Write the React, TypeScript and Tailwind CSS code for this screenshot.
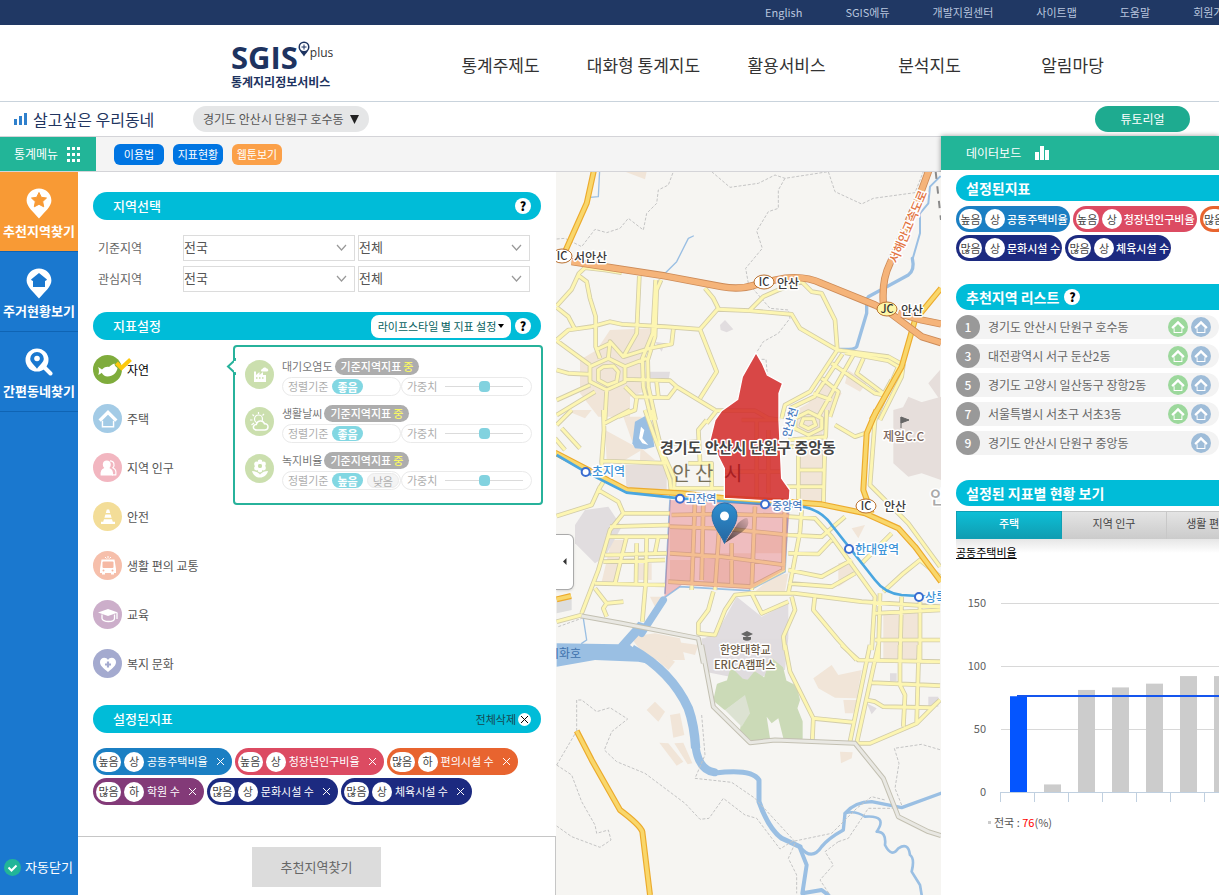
import React from "react";

/* ---------- data ---------- */

const topLinks = ["English", "SGIS에듀", "개발지원센터", "사이트맵", "도움말", "회원가입"];
const mainLinks = ["통계주제도", "대화형 통계지도", "활용서비스", "분석지도", "알림마당"];

type Tag = { level: string; grade: string; name: string; tone: string };

const TONE_BLUE = "bg-[#1b7fc3]";
const TONE_RED = "bg-[#dc4b62]";
const TONE_ORANGE = "bg-[#e8642f]";
const TONE_PURPLE = "bg-[#833a78]";
const TONE_NAVY = "bg-[#1c2a80]";

const tags: Tag[] = [
  { level: "높음", grade: "상", name: "공동주택비율", tone: TONE_BLUE },
  { level: "높음", grade: "상", name: "청장년인구비율", tone: TONE_RED },
  { level: "많음", grade: "하", name: "편의시설 수", tone: TONE_ORANGE },
  { level: "많음", grade: "하", name: "학원 수", tone: TONE_PURPLE },
  { level: "많음", grade: "상", name: "문화시설 수", tone: TONE_NAVY },
  { level: "많음", grade: "상", name: "체육시설 수", tone: TONE_NAVY },
];

const indicators = [
  { name: "대기오염도", icon: "factory", options: ["좋음"] },
  { name: "생활날씨", icon: "weather", options: ["좋음"] },
  { name: "녹지비율", icon: "flower", options: ["높음", "낮음"] },
];

const regions = [
  { no: 1, name: "경기도 안산시 단원구 호수동", green: true },
  { no: 3, name: "대전광역시 서구 둔산2동", green: true },
  { no: 5, name: "경기도 고양시 일산동구 장항2동", green: true },
  { no: 7, name: "서울특별시 서초구 서초3동", green: true },
  { no: 9, name: "경기도 안산시 단원구 중앙동", green: false },
];

/* ---------- small icons ---------- */

function Pin({ children }: { children: React.ReactNode }) {
  return (
    <svg width="26" height="31" viewBox="0 0 26 31" aria-hidden="true">
      <path d="M13 .5C6 .5 .6 5.900 .6 12.500c0 6 6.400 11 12.400 18 6-7 12.400-12 12.400-18C25.400 5.900 20 .5 13 .5z" fill="#fff" />
      {children}
    </svg>
  );
}

function StarPin() {
  return (
    <Pin>
      <path d="M13 4.500l2.300 4.800 5.200.7-3.800 3.600 1 5.200-4.700-2.500-4.700 2.500 1-5.200L5.500 10l5.200-.7z" fill="#f89a35" stroke="#f89a35" strokeLinejoin="round" />
    </Pin>
  );
}

function HousePin() {
  return (
    <Pin>
      <path d="M13 5l8 6.500-1.300 1.400-.7-.4V19H7v-6.500l-.7.4L5 11.500z" fill="#1a78cf" />
    </Pin>
  );
}

function SearchPin() {
  return (
    <svg width="28" height="28" viewBox="0 0 28 28" aria-hidden="true">
      <circle cx="12" cy="12" r="11.500" fill="#fff" />
      <path d="M19 19l6.500 6.500" stroke="#fff" strokeWidth="4" strokeLinecap="round" />
      <path d="M12 4a6.800 6.800 0 0 0-6.800 6.800c0 3.500 4 5.900 6.800 9.900 2.800-4 6.800-6.400 6.800-9.900A6.800 6.800 0 0 0 12 4z" fill="#1a78cf" />
      <circle cx="12" cy="10.500" r="2.800" fill="#fff" />
    </svg>
  );
}

function HouseGlyph({ size = 14 }: { size?: number }) {
  return (
    <svg width={size} height={size} viewBox="0 0 18 18" aria-hidden="true">
      <path d="M1.500 10.500L9 3l7.500 7.500" fill="none" stroke="#fff" strokeWidth="3" />
      <path d="M4 10.500v5.500h10v-5.500" fill="none" stroke="#fff" strokeWidth="1.300" />
    </svg>
  );
}

function Glyph({ name }: { name: string }) {
  const common = { width: 20, height: 20, viewBox: "0 0 20 20", "aria-hidden": true } as const;
  switch (name) {
    case "fish":
      return (
        <svg {...common}>
          <path d="M0 7c1 .6 2.500 1.200 4 2.500C6.500 7 9 6.500 11 7c2-2 4-3 5.500-3.500 0 2 1 3.300 3 4.500-.7 4.500-4.500 8.500-10 8.500-2.600 0-4.500-1.500-5.800-3.700C2.500 14 1.500 14.500 .2 14.800 1 13 1 12 .9 11 1 9.500 .6 8.300 0 7z" fill="#fff" />
        </svg>
      );
    case "people":
      return (
        <svg {...common}>
          <path d="M12 2.800c4 0 5.300 4.200 2.800 7 3 1.200 3.600 3.500 3 7H14" fill="none" stroke="#fff" strokeWidth="1.200" />
          <path d="M8.800 2.500c2.400 0 4 1.600 4 3.900 0 1.500-.6 2.800-1.500 3.600 2.800.9 4.200 3.300 3.700 7.500H2.600c-.5-4.200.9-6.600 3.700-7.500a5 5 0 0 1-1.500-3.600c0-2.300 1.600-3.900 4-3.900z" fill="#fff" />
        </svg>
      );
    case "cone":
      return (
        <svg {...common}>
          <path d="M8.800 2.500h2.400l1 3.500H7.800zM7.400 7.500h5.200l1 3.200H6.400zM6 12.200h8l.8 2.600H17V17H3v-2.200h2.200z" fill="#fff" />
        </svg>
      );
    case "bus":
      return (
        <svg {...common}>
          <path d="M7 1l1.500 1.500M10 0v2.500M13 1l-1.500 1.500" stroke="#fff" />
          <path d="M3.500 3.500h13L18 13v4h-2v1.500h-3V17H7v1.500H4V17H2v-4z" fill="#fff" />
          <rect x="4.500" y="5.500" width="11" height="6.500" rx="1" fill="#f6b9a4" />
          <circle cx="5.500" cy="14.500" r="1" fill="#f6b9a4" />
          <circle cx="14.500" cy="14.500" r="1" fill="#f6b9a4" />
        </svg>
      );
    case "cap":
      return (
        <svg {...common}>
          <path d="M0 7.500L10 4l10 3.500-10 3.500z" fill="#fff" />
          <path d="M4 9.500v4c0 1.600 3 3 6.500 3s6-1.400 6-3v-4M19 8v6" fill="none" stroke="#fff" strokeWidth="1.300" />
        </svg>
      );
    case "heart":
      return (
        <svg {...common}>
          <path d="M10 18C5 14 2 11.500 2 8c0-2.600 2-4.300 4.200-4.300 1.700 0 3 .9 3.800 2.300.8-1.400 2.100-2.300 3.800-2.300C16 3.700 18 5.400 18 8c0 3.500-3 6-8 10z" fill="#fff" />
          <path d="M10 7.500v6M7 10.500h6" stroke="#a4aacf" strokeWidth="2.200" />
        </svg>
      );
    case "factory":
      return (
        <svg {...common}>
          <path d="M4 17V6.500h2V10l3.500-3v3L13 7v3h3v7z" fill="#fff" />
          <path d="M6 13h1.500M9 13h1.500M12 13h1.500" stroke="#a3c96d" strokeWidth="1.500" />
          <path d="M11 5.500c0-1.500 1.400-1.500 1.500-1.500C13 2 16 2 16.500 3.500c2 0 2.500 2.800.5 3h-4.500c-.9 0-1.500-.3-1.500-1z" fill="#fff" />
        </svg>
      );
    case "weather":
      return (
        <svg {...common}>
          <circle cx="8.500" cy="7" r="4" fill="none" stroke="#fff" strokeWidth="1.200" />
          <path d="M8.500 0v2M2.500 2.500L4 4M14 2l-1.500 1.500M0 8h2.500M1.500 13L4 11" stroke="#fff" strokeWidth="1.200" />
          <path d="M7 18c-2.500 0-4-1.500-3.500-3.500.3-1.300 1.500-2 2.800-2C7 10 9 8.800 11 9c1.800.1 3 1.200 3.500 2.800 2-.3 3.600 1 3.500 3.200-.1 2-1.500 3-3.500 3z" fill="#a3c96d" stroke="#fff" strokeWidth="1.500" />
        </svg>
      );
    case "flower":
      return (
        <svg {...common}>
          <g fill="#fff">
            <circle cx="10" cy="3" r="2.400" />
            <circle cx="13.500" cy="5" r="2.400" />
            <circle cx="13.500" cy="9" r="2.400" />
            <circle cx="10" cy="11" r="2.400" />
            <circle cx="6.500" cy="9" r="2.400" />
            <circle cx="6.500" cy="5" r="2.400" />
            <path d="M2 12c3 0 6 1 8 3.500 2-2.500 5-3.500 8-3.500-1 4-4 6.500-8 6.500S3 16 2 12z" />
          </g>
          <circle cx="10" cy="7" r="2" fill="#a3c96d" />
        </svg>
      );
    default:
      return <HouseGlyph size={20} />;
  }
}

function Help() {
  return (
    <button type="button" aria-label="도움말" className="grid size-4 shrink-0 place-items-center rounded-full bg-white text-xs leading-4 font-black text-black">
      ?
    </button>
  );
}

/* ---------- shared parts ---------- */

function SectionBar({ title, children }: { title: string; children?: React.ReactNode }) {
  return (
    <div className="flex h-7 items-center justify-between rounded-full bg-[#00bcd8] pr-[10px] pl-5">
      <h2 className="text-[13px] font-medium text-white">{title}</h2>
      {children}
    </div>
  );
}

function TagBadges({ tag, narrow }: { tag: Tag; narrow?: boolean }) {
  return (
    <>
      <span className={"grid h-5 place-items-center rounded-full bg-white text-[11px] text-[#444] " + (narrow ? "w-[23px]" : "w-[25px]")}>{tag.level}</span>
      <span className="ml-[3px] grid size-5 place-items-center rounded-full bg-white text-[11px] text-[#444]">{tag.grade}</span>
    </>
  );
}

function RegionSelect({ label, value }: { label: string; value: string }) {
  return (
    <div className="relative w-[172px]">
      <select aria-label={label} defaultValue={value} className="block h-[26px] w-full appearance-none border border-[#dcdcdc] bg-white pb-[2px] text-[13px] leading-[22px] text-[#555]">
        <option>{value}</option>
      </select>
      <svg className="pointer-events-none absolute top-[9px] right-2" width="11" height="8" viewBox="0 0 11 8" aria-hidden="true">
        <path d="M1 1l4.500 5L10 1" fill="none" stroke="#999" strokeWidth="1.200" />
      </svg>
    </div>
  );
}

/* ---------- left side ---------- */

function SideNav() {
  const item = "flex h-20 flex-col items-center border-b border-[#0f64b4] pt-4 text-[13px] font-bold whitespace-nowrap text-white";
  return (
    <nav className="flex w-[78px] shrink-0 flex-col bg-[#1a78cf]">
      <a href="#recommend" className={item + " bg-[#f89a35]"}>
        <StarPin />
        <span className="mt-[2px] leading-5">추천지역찾기</span>
      </a>
      <a href="#housing" className={item}>
        <HousePin />
        <span className="mt-[2px] leading-5">주거현황보기</span>
      </a>
      <a href="#easy" className={item}>
        <SearchPin />
        <span className="mt-[5px] leading-5">간편동네찾기</span>
      </a>
      <button type="button" className="mt-auto mb-[18px] flex items-center gap-1 pl-1 text-[13px] leading-5 whitespace-nowrap text-white">
        <svg width="17" height="17" viewBox="0 0 17 17" aria-hidden="true">
          <circle cx="8.500" cy="8.500" r="8.500" fill="#22b598" />
          <path d="M4.500 8.500l3 3 5-5" fill="none" stroke="#fff" strokeWidth="2" />
        </svg>
        자동닫기
      </button>
    </nav>
  );
}

const categories = [
  { name: "자연", icon: "fish", tone: "bg-[#7fac3c]" },
  { name: "주택", icon: "house", tone: "bg-[#a3cbe6]" },
  { name: "지역 인구", icon: "people", tone: "bg-[#f2b6c0]" },
  { name: "안전", icon: "cone", tone: "bg-[#f3dd98]" },
  { name: "생활 편의 교통", icon: "bus", tone: "bg-[#f6bfab]" },
  { name: "교육", icon: "cap", tone: "bg-[#ccaeca]" },
  { name: "복지 문화", icon: "heart", tone: "bg-[#a4aacf]" },
];

function IndicatorPopup() {
  return (
    <div className="relative mt-[5px] h-40 w-[310px] shrink-0 rounded border-2 border-[#27b29b] bg-white">
      <svg className="absolute top-[11px] -left-[9px]" width="10" height="17" viewBox="0 0 10 17" aria-hidden="true">
        <path d="M9 0v2L2 8.500 9 15v2" fill="#fff" stroke="#27b29b" strokeWidth="2" />
        <path d="M9 3v11" stroke="#fff" strokeWidth="2" />
      </svg>
      <ul className="flex flex-col gap-2 pt-[10px] pl-[10px]">
        {indicators.map((it) => (
          <li key={it.name} className="flex h-[39px] opacity-60">
            <span className="mt-[3px] grid size-[29px] shrink-0 place-items-center rounded-full bg-[#a9cb7a]">
              <Glyph name={it.icon} />
            </span>
            <div className="ml-2">
              <div className="flex h-[18px] items-center gap-[2px]">
                <span className="text-[11px] text-[#111]">{it.name}</span>
                <span className="flex h-[17px] items-center gap-[2px] rounded-full bg-[#777] px-[6px] text-[11px] font-medium text-white">
                  기준지역지표 <em className="text-[#f3f000] not-italic">중</em>
                </span>
              </div>
              <div className="mt-[2px] flex h-[19px]">
                <div className="flex w-[119px] items-center gap-1 rounded-full border border-[#ddd] pl-[5px] text-[11px] text-[#777]">
                  정렬기준
                  {it.options.map((o, i) => (
                    <button key={o} type="button" className={"h-[15px] rounded-full px-[5px] text-[11px] leading-[14px] " + (i === 0 ? "bg-[#30bdd0] font-bold text-white" : "border border-[#ddd] bg-[#eee] text-[#777]")}>
                      {o}
                    </button>
                  ))}
                </div>
                <label className="flex w-[131px] items-center gap-2 rounded-full border border-[#ddd] pl-[5px] text-[11px] text-[#777]">
                  가중치
                  <input
                    type="range"
                    min={0}
                    max={10}
                    defaultValue={5}
                    className="h-[11px] w-[78px] appearance-none bg-transparent bg-[linear-gradient(#c4c4c4,#c4c4c4)] bg-[length:100%_1px] bg-center bg-no-repeat [&::-webkit-slider-thumb]:size-[11px] [&::-webkit-slider-thumb]:appearance-none [&::-webkit-slider-thumb]:rounded-[4px] [&::-webkit-slider-thumb]:bg-[#30b5cb]"
                  />
                </label>
              </div>
            </div>
          </li>
        ))}
      </ul>
    </div>
  );
}

function SettingsPanel() {
  return (
    <section className="flex w-[478px] shrink-0 flex-col bg-white">
      <div className="px-[15px] pt-5">
        <SectionBar title="지역선택">
          <Help />
        </SectionBar>
        <div className="mt-[15px] flex flex-col gap-[5px] pl-[5px] text-xs text-[#666]">
          {["기준지역", "관심지역"].map((l) => (
            <div key={l} className="flex items-center">
              <span className="w-[85px]">{l}</span>
              <div className="flex gap-[3px]">
                <RegionSelect label={l + " 시도"} value="전국" />
                <RegionSelect label={l + " 시군구"} value="전체" />
              </div>
            </div>
          ))}
        </div>
      </div>

      <div className="mt-5 px-[15px]">
        <SectionBar title="지표설정">
          <div className="flex items-center gap-1">
            <button type="button" className="flex h-[23px] w-[140px] items-center justify-center gap-[2px] rounded-lg bg-white text-[11px] whitespace-nowrap text-[#05615e]">
              라이프스타일 별 지표 설정
              <svg width="6" height="4" viewBox="0 0 6 4" aria-hidden="true">
                <path d="M0 0h6L3 4z" fill="#000" />
              </svg>
            </button>
            <Help />
          </div>
        </SectionBar>
        <div className="flex items-start">
          <ul className="flex w-[140px] shrink-0 flex-col gap-5 pt-[15px]">
            {categories.map((c, i) => (
              <li key={c.name}>
                <button type="button" className={"relative flex h-[29px] items-center gap-[5px] text-xs whitespace-nowrap " + (i === 0 ? "text-black" : "text-[#555]")}>
                  <span className={"grid size-[29px] place-items-center rounded-full " + c.tone}>
                    <Glyph name={c.icon} />
                  </span>
                  {c.name}
                  {i === 0 && (
                    <svg className="absolute top-[2px] left-[22px]" width="17" height="14" viewBox="0 0 17 14" aria-hidden="true">
                      <path d="M1.500 6l5 5L15.500 2.500" fill="none" stroke="#fdc90d" strokeWidth="4" />
                    </svg>
                  )}
                </button>
              </li>
            ))}
          </ul>
          <IndicatorPopup />
        </div>
      </div>

      <div className="mt-[27px] px-[15px]">
        <SectionBar title="설정된지표">
          <button type="button" className="flex items-center gap-[2px] text-[11px] text-[#17474f]">
            전체삭제
            <svg width="13" height="13" viewBox="0 0 13 13" aria-hidden="true">
              <circle cx="6.500" cy="6.500" r="6.500" fill="#fff" />
              <path d="M3 3l7 7M10 3l-7 7" stroke="#000" />
            </svg>
          </button>
        </SectionBar>
        <ul className="mt-[15px] flex flex-wrap gap-[3px]">
          {tags.map((t) => (
            <li key={t.name} className={"flex h-[27px] items-center rounded-full pr-[7px] pl-[3px] " + t.tone}>
              <TagBadges tag={t} />
              <span className="ml-[3px] text-[11px] text-white">{t.name}</span>
              <button type="button" aria-label={t.name + " 삭제"} className="ml-2">
                <svg width="9" height="9" viewBox="0 0 9 9" aria-hidden="true">
                  <path d="M1 1l7 7M8 1L1 8" stroke="#fff" />
                </svg>
              </button>
            </li>
          ))}
        </ul>
      </div>

      <div className="mt-auto flex h-[59px] items-start justify-center border-t border-r border-[#c6c6c6] pt-[10px]">
        <button type="button" className="h-10 w-[129px] bg-[#dcdcdc] text-[13px] text-[#666]">
          추천지역찾기
        </button>
      </div>
    </section>
  );
}

/* ---------- map ---------- */

/* Map geometry is drawn in thirds of a pixel, in three vertical sheets. */
const SHEET_Y = [0, 720, 1425];

const streets: string[][] = [
  [
    "M200 308L150 300L90 293L72 310L50 358L5 408",
    "M72 318L95 335L105 385L122 440V530L135 565",
    "M5 412L40 440L60 478",
    "M5 510L40 480L110 470L165 455L200 463L330 470L435 478",
    "M5 512L50 545L105 585",
    "M253 318L245 490L205 560",
    "M302 330L293 490L262 565L265 650L290 750",
    "M318 330L305 360L300 500L278 570L280 650L302 750",
    "M450 355L475 385L490 415L435 478L485 605L435 685",
    "M490 418L585 422L710 433L735 475L847 540",
    "M585 420L625 380L670 360L740 335L770 365L800 370L840 450L847 540",
    "M847 540L1000 560L1045 585L1040 620L975 750",
    "M870 548L1000 572L1030 590L960 750",
    "M160 565L210 590V635L155 660L105 635V590Z",
    "M145 590L175 588L190 605L185 635L158 645L130 630V600Z",
    "M5 600L40 610L105 613",
    "M210 628L345 632L365 650L480 720",
    "M365 650L340 683L240 680L210 650",
    "M5 690L105 645",
    "M5 735L120 665",
    "M155 660L150 750",
    "M245 685L240 720L190 740",
    "M160 565L165 515L205 560L285 535L350 522L355 478",
    "M122 540L165 520",
    "M210 590L275 565",
    "M305 635L310 680",
    "M480 722H600L640 745L675 750",
    "M485 722L455 760",
    "M847 540L765 665L690 705L680 745",
    "M862 552L778 680L705 715",
    "M895 555L790 740",
    "M925 565L905 610L985 670",
    "M830 580L960 670L985 675L1010 630",
    "M800 625L850 665L825 740",
    "M775 670L830 690",
  ],
  [
    "M50 0L5 45",
    "M0 85L30 120",
    "M20 55L75 115",
    "M145 0L147 60L140 155L145 215",
    "M145 42L225 0",
    "M140 153L340 160",
    "M270 0L345 210L350 265",
    "M290 0L320 120L358 205L355 265",
    "M145 215L130 240L190 275L205 310L165 360L130 480L80 610",
    "M5 318L110 285L135 230",
    "M205 310H345",
    "M165 350L345 345",
    "M155 380H340",
    "M150 435L335 430",
    "M145 455L330 450",
    "M120 520L330 525",
    "M215 380L180 520",
    "M245 400L243 520",
    "M275 380L272 520L262 635",
    "M310 380L300 430",
    "M120 535L155 580L145 595L155 620",
    "M155 580L205 575",
    "M80 615L5 635",
    "M420 275L410 540",
    "M445 275L440 510",
    "M498 280L480 540",
    "M530 400V530",
    "M600 290L590 540",
    "M350 315L500 312L700 318",
    "M345 350L500 355L700 375",
    "M345 430L500 440L690 465",
    "M340 515L590 530L685 480L690 290",
    "M700 375L800 380L870 320",
    "M740 300L735 365L700 550",
    "M700 320L780 325L830 380L960 560L950 720",
    "M700 430L790 432L830 390",
    "M700 480L800 500L890 450",
    "M700 520L830 530L900 490",
    "M590 550H720L920 575L1155 590",
    "M710 560L720 600L685 680L690 720",
    "M780 555L775 600L850 690L905 750",
    "M590 550L620 610L700 575",
    "M475 545L460 600L430 640V670L480 675L510 600L540 555L590 550",
    "M975 550L970 750",
    "M1040 560L1035 750",
    "M1095 575V750",
    "M960 610L1155 600",
    "M960 690H1155",
    "M985 545L1045 490L1095 450L1155 500",
    "M920 460L1010 370",
    "M960 30L945 225L1060 340L1155 470",
    "M840 45L900 80L930 70",
    "M700 110H730V280",
    "M810 80L805 290",
    "M735 180H810",
    "M690 230H810",
    "M815 0L812 80L700 90",
    "M760 5L800 25V55L760 75L720 55V25Z",
    "M745 26H775L782 45L760 56L738 45Z",
    "M455 30L430 60L435 155",
    "M350 100L435 95",
    "M400 160H470V240",
    "M360 235H510",
    "M605 30V265",
    "M640 60V250",
    "M510 185H675",
    "M560 30H670",
  ],
  [
    "M690 0L705 80L775 220L895 232",
    "M775 220L772 285",
    "M945 0L885 290",
    "M970 0L905 295L945 295L1085 235L1155 165",
    "M860 0L910 45L1155 50",
    "M1035 0V120L1050 150L1045 245",
    "M1092 0L1085 235",
    "M950 113L1155 122",
    "M935 165L960 170L985 185L1130 188L1155 165",
  ],
];

const goldRoads: string[][] = [
  ["M117 0L95 100L30 245L15 270", "M1158 355L1080 450L1040 590L950 750"],
  [
    "M965 0L935 70L925 240L950 310",
    "M0 128L100 180L215 240L380 250L510 265L700 275L800 283L930 310L1030 355L1080 410L1158 515",
    "M5 568L48 558",
  ],
  ["M65 258L110 345L195 495Q255 540 262 560L285 750"],
];

const greyRoads: string[][] = [
  [],
  ["M80 618L200 640L430 685L445 760"],
  ["M440 0L475 185L585 293L660 285L900 295L985 400L1030 515L1120 560L1158 572"],
];

const motorways: string[][] = [
  [
    "M50 275L330 318L500 350Q555 360 600 345L660 330Q740 312 800 340L960 405L1000 425L1100 500L1158 518",
    "M1122 0L1100 60L1005 280Q980 330 985 400",
    "M1030 430L1100 450L1158 462",
  ],
  [],
  [],
];

const borders: string[][] = [
  [
    "M5 207L30 205L80 230L120 178L155 188L195 175L220 145L265 180L275 130L305 100L310 60L340 45L355 5",
    "M470 5L525 52L610 40L660 15L690 25L820 5L840 65L920 102L955 85L1080 68L1105 5",
    "M690 25L670 60V115L640 125L605 183L622 235L572 295L580 340L645 415L700 420L705 445L670 490L625 515L603 550",
    "M620 568H633L637 615",
  ],
  ["M10 650L80 625"],
  [
    "M65 258L65 165L80 165L125 200L165 188L218 222L170 260L148 315L185 350L270 385L390 475L435 523L462 520L505 460L570 510L605 520L675 612L710 590L830 565L905 490L950 455L990 465",
    "M5 360L65 258M5 360L50 390L80 470L120 540L125 565L160 555L168 585L135 607L50 575L5 543",
    "M1040 480L1020 430L1032 355L1018 310L1100 298L1158 315",
    "M440 210L450 330L420 400L530 412L600 460L720 590",
    "M720 595L700 640L725 690V745M850 590L810 620L835 660L795 705L825 750M850 590L880 580L940 490H1030",
  ],
];

function Roads({ sets, edge, fill, wide, narrow }: { sets: string[][]; edge: string; fill: string; wide: number; narrow: number }) {
  const layer = (stroke: string, width: number) => (
    <g stroke={stroke} strokeWidth={width} fill="none" strokeLinejoin="round">
      {sets.map((paths, i) => (
        <path key={i} transform={"translate(0 " + SHEET_Y[i] + ")"} d={paths.join("")} />
      ))}
    </g>
  );
  return (
    <>
      {layer(edge, wide)}
      {layer(fill, narrow)}
    </>
  );
}

function MapLabel({ x, y, size = 12, fill = "#3a3a3a", weight = 500, rotate = 0, children }: { x: number; y: number; size?: number; fill?: string; weight?: number; rotate?: number; children: string }) {
  return (
    <text x={x} y={y} fontSize={size} fill={fill} fontWeight={weight} stroke="#fff" strokeWidth="3" paintOrder="stroke" strokeLinejoin="round" transform={rotate ? "rotate(" + rotate + " " + x + " " + y + ")" : undefined}>
      {children}
    </text>
  );
}

function Junction({ x, y, label, fill = "#fff" }: { x: number; y: number; label: string; fill?: string }) {
  return (
    <g>
      <ellipse cx={x} cy={y} rx="10" ry="7" fill={fill} stroke="#b9702f" />
      <text x={x} y={y + 4} fontSize="11" fontWeight="500" textAnchor="middle" fill="#333">
        {label}
      </text>
    </g>
  );
}

function MapView() {
  return (
    <div className="relative min-w-0 flex-1 overflow-hidden bg-[#f6f5f2]">
      <svg className="absolute inset-0 size-full" viewBox="556 172 385 723" preserveAspectRatio="xMinYMin slice" role="img" aria-label="안산시 지도">
        <defs>
          <linearGradient id="pin" x1="0" y1="0" x2="0" y2="1">
            <stop offset="0" stopColor="#2e8fd0" />
            <stop offset="1" stopColor="#2566a0" />
          </linearGradient>
          <linearGradient id="pinShade" x1="0" y1="1" x2="1" y2="0">
            <stop offset="0" stopColor="#000" stopOpacity=".7" />
            <stop offset="1" stopColor="#000" stopOpacity=".1" />
          </linearGradient>
        </defs>
        <g transform="translate(555 170) scale(.33333)">
          {/* built-up blocks */}
          <g fill="#f1e5d8">
            <path d="M165 480L290 475L265 570L280 660L225 680V740H130L75 670V570L125 540Z" />
            <path d="M210 5L270 28L275 5Z" />
            <path d="M800 630L860 670L820 740L680 745L760 700Z" />
            <path d="M880 600L935 640L915 665L870 640Z" />
          </g>
          <g fill="#e1dddf">
            <path d="M495 465L510 450L535 478L515 487L497 480Z" />
            <path d="M280 605H345L340 635H285Z" />
            <path d="M300 515L330 520L320 545Z" />
          </g>
          <g fill="#e6dedb">
            <path d="M1155 600V690L1120 640ZM1060 680L1158 720V750H1025Z" />
          </g>
          <g transform="translate(0 720)">
            <g fill="#f1e5d8">
              <path d="M30 0H110L90 25ZM150 60L260 120L210 150H155Z" />
              <path d="M205 20H260L255 150L300 150L230 90Z" />
              <path d="M735 100H810V290H735ZM700 0H820L800 80L700 60Z" />
              <path d="M170 390H210L190 515H140ZM250 460H290V510H250ZM285 560L330 560L300 590Z" />
              <path d="M850 460L895 450V500L850 530ZM890 355L930 345L910 385Z" />
              <path d="M650 500L700 490L690 545H600ZM985 610H1090V750H985Z" />
              <path d="M225 680L300 670L375 685L390 750H280Z" />
              <path d="M345 355H420V430H345ZM445 430H595V530H445ZM345 450H410V515H345ZM600 370H690V430H600Z" />
            </g>
            <g fill="#e6dedb">
              <path d="M1015 0L1158 -40V210L1100 190L1060 200L1015 160Z" />
              <path d="M210 165H335V240H215Z" />
            </g>
            <path d="M90 300L160 290L200 350L150 440L120 460L60 400V345Z" fill="#e1dddf" />
            <path d="M545 560L620 620L700 580V680L690 780H500L440 690L490 660Z" fill="#e1dde0" />
            <path d="M5 560H50V600L5 610Z" fill="#ddd" />
          </g>
          <g transform="translate(0 1425)">
            <g fill="#f1e5d8">
              <path d="M300 40L320 25L360 50L340 75ZM275 195L300 170L330 200L310 230ZM345 210L375 205L388 270L355 278Z" />
              <path d="M313 293L340 295L385 350L365 362ZM358 295L385 293L412 355L398 358Z" />
              <path d="M775 100L830 60L850 90L920 75L905 160L840 158L790 130ZM865 165L905 165L895 205H870ZM855 320L893 322L890 340L858 355Z" />
              <path d="M360 -10L430 0L420 30L380 20Z" />
            </g>
            <g fill="#e0dcdf">
              <path d="M440 -20H700L680 60L600 110L450 80Z" />
              <path d="M935 175L965 190L950 208ZM1005 85H1025V108H1005ZM1120 155H1150V185H1120Z" />
            </g>
            <path
              d="M490 120L520 110L530 75L560 105L580 110L600 85L630 105L650 45L680 70L690 110L720 125L730 165L722 190L738 230V280L660 280L600 290L560 255L565 225L585 205L565 150L510 190L480 165Z"
              fill="#cbdab7"
              stroke="#cbdab7"
              strokeWidth="10"
              strokeLinejoin="round"
            />
            <path d="M635 215L650 235L670 220L685 280H645Z" fill="#f6f5f2" />
            <path d="M510 195L570 150L585 205L560 245Z" fill="#dce2d2" />
          </g>

          {/* water */}
          <g stroke="#9abfe3" fill="none" strokeLinejoin="round" strokeLinecap="round">
            <path d="M105 82L130 80L134 0M325 315L365 275L400 205L415 198" strokeWidth="4" />
            <path d="M940 380L1060 315Q1080 300 1072 265" strokeWidth="10" />
            <path d="M1072 270L1095 190V130L1120 100L1125 50L1155 20" strokeWidth="6" />
            <path d="M935 385V430L905 530Q900 540 850 538" strokeWidth="10" />
            <g transform="translate(0 720)">
              <path d="M260 670L325 570" strokeWidth="22" />
              <path d="M325 565L375 530L580 542L690 485L700 280M330 550L345 270" strokeWidth="5" />
              <path d="M85 625L95 690L80 700" strokeWidth="4" />
            </g>
            <g transform="translate(0 1425)">
              <path d="M230 12Q350 80 400 190Q418 240 422 310" strokeWidth="28" strokeLinecap="butt" />
              <path d="M422 308Q432 375 478 382" strokeWidth="24" />
              <path d="M480 384Q590 370 612 405V470Q640 550 680 580L735 605" strokeWidth="15" />
              <path d="M735 605Q770 650 800 605Q820 580 865 555L870 505Q900 470 950 470L1040 488L1158 445" strokeWidth="10" />
              <path d="M735 610L755 660L742 745L800 735L820 750" strokeWidth="12" />
              <path d="M870 505Q900 495 930 515Q1000 510 965 560Q995 560 990 600Q1010 640 1030 610Q1060 590 1065 630Q1080 640 1070 680L1095 720L1100 750" strokeWidth="8" />
            </g>
          </g>
          <g fill="#9abfe3">
            <path transform="translate(0 720)" d="M240 115L232 100L240 35L285 10L298 110L270 118Z" />
            <path transform="translate(0 1425)" d="M5 -5L190 -2L250 -70L280 -60L225 0L300 60L250 50L120 45L5 65Z" />
          </g>
          <path transform="translate(0 720)" d="M258 50L268 60L262 85L280 105L262 100L252 85Z" fill="#fff" />

          <g stroke="#c4c4c4" strokeWidth="3" strokeDasharray="9 5" fill="none">
            {borders.map((b, i) => (
              <path key={i} transform={"translate(0 " + SHEET_Y[i] + ")"} d={b.join("")} />
            ))}
          </g>

          <Roads sets={streets} edge="#d2cca9" fill="#fdf6b2" wide={14} narrow={9} />
          <Roads sets={greyRoads} edge="#c3c0b2" fill="#e9e8e3" wide={15} narrow={9} />
          <Roads sets={goldRoads} edge="#ecab2e" fill="#f9d76b" wide={18} narrow={11} />
          <Roads sets={motorways} edge="#cd8b58" fill="#f5b47a" wide={22} narrow={17} />
          <path d="M1142 5L1158 150" stroke="#8a8a8a" strokeWidth="6" strokeDasharray="22 22" />

          <path d="M5 855L90 905L215 968L375 985L630 1003L740 1010Q800 1020 830 1065L960 1230Q990 1270 1040 1275L1155 1282" fill="none" stroke="#4aa6e0" strokeWidth="8" />

          {/* highlighted districts */}
          <path d="M345 990L705 1005L690 1200L585 1258L380 1245L328 1280Z" fill="#dc2a36" fillOpacity=".27" />
          <path d="M603 548L622 580L637 615L683 640L672 670V750L680 925L705 960L703 996L508 985V895L465 810L480 750L500 722L548 688L562 620Z" fill="#d32a2a" fillOpacity=".86" stroke="#fff" strokeWidth="4" />

          <g fill="#fff" stroke="#3a6cd0" strokeWidth="6">
            <circle cx="92" cy="906" r="12" />
            <circle cx="375" cy="986" r="12" />
            <circle cx="630" cy="1003" r="12" />
            <circle cx="882" cy="1137" r="12" />
            <circle cx="1092" cy="1281" r="12" />
          </g>
        </g>

        <Junction x={562} y={256} label="IC" />
        <Junction x={764} y={282} label="IC" />
        <Junction x={887} y={309} label="JC" fill="#fdf6a8" />
        <Junction x={866} y={506} label="IC" />

        <MapLabel x={574} y={262}>서안산</MapLabel>
        <MapLabel x={777} y={288}>안산</MapLabel>
        <MapLabel x={901} y={315}>안산</MapLabel>
        <MapLabel x={884} y={511}>안산</MapLabel>
        <MapLabel x={897} y={264} fill="#e2733f" rotate={-67}>서해안고속도로</MapLabel>
        <MapLabel x={790} y={438} size={11} fill="#4a7cc0" rotate={-75}>안산천</MapLabel>
        <MapLabel x={592} y={476} fill="#3d93d8">초지역</MapLabel>
        <MapLabel x={686} y={503} size={11} fill="#4f82c4">고잔역</MapLabel>
        <MapLabel x={772} y={510} size={11} fill="#4f82c4">중앙역</MapLabel>
        <MapLabel x={855} y={554} fill="#3d93d8">한대앞역</MapLabel>
        <MapLabel x={925} y={602} fill="#3d93d8">상록수</MapLabel>
        <MapLabel x={883} y={441} size={12} fill="#7c665c">제일C.C</MapLabel>
        <MapLabel x={720} y={654} size={11} fill="#6b5a46">한양대학교</MapLabel>
        <MapLabel x={714} y={669} size={11} fill="#6b5a46">ERICA캠퍼스</MapLabel>
        <MapLabel x={930} y={504} size={18} fill="#aaa">안</MapLabel>
        <text x="548" y="658" fontSize="12" fill="#3f72ad">시화호</text>
        <text x="672" y="481" fontSize="20" fill="#77705a">안 산</text>
        <text x="724" y="481" fontSize="20" fill="#a81e22">시</text>
        <MapLabel x={660} y={453} size={15} weight={600} fill="#444">경기도 안산시 단원구 중앙동</MapLabel>

        <path d="M901 417v11M901 417l8 3-8 3z" stroke="#666" fill="#666" />
        <path d="M741 634l6-3 6 3-6 3zM743 637v2.500q4 2.500 8 0V637" fill="#666" />

        <path d="M725 543L738 523Q748 515 748 520Q750 526 742 532Z" fill="url(#pinShade)" />
        <path d="M724.500 543.500C721 534 712 526 712 515.500a12.500 12.500 0 0 1 25 0C737 526 728 534 724.500 543.500z" fill="url(#pin)" stroke="#2a6fa8" />
        <circle cx="724.500" cy="516" r="4.500" fill="#fff" />
      </svg>
      <button type="button" aria-label="패널 접기" className="absolute top-1/2 left-0 grid h-14 w-[18px] place-items-center rounded-r-md border border-l-0 border-[#aaa] bg-white shadow">
        <svg width="5" height="9" viewBox="0 0 5 9" aria-hidden="true">
          <path d="M4.500 1L1 4.500 4.500 8z" fill="#333" />
        </svg>
      </button>
    </div>
  );
}

/* ---------- data board ---------- */

function BoardTag({ tag }: { tag: Tag }) {
  return (
    <li className={"flex h-[26px] shrink-0 items-center rounded-full pr-[2px] pl-[3px] " + tag.tone}>
      <TagBadges tag={tag} narrow />
      <span className="ml-[2px] text-[11px] font-medium text-white">{tag.name}</span>
    </li>
  );
}

function BoardBar({ title, children }: { title: string; children?: React.ReactNode }) {
  return (
    <div className="flex h-[26px] items-center gap-[5px] rounded-l-full bg-[#00bcd8] pl-[10px]">
      <h2 className="text-[14px] font-bold text-white">{title}</h2>
      {children}
    </div>
  );
}

function Chart() {
  const values = [76, 6, 81, 83, 86, 92, 92];
  const y = (v: number) => 206 - v * 1.260;
  return (
    <svg className="block w-[278px]" height="236" viewBox="941 586 278 236" aria-label="공동주택비율 차트" role="img">
      <g transform="translate(0 585)">
        {[150, 100, 50, 0].map((v) => (
          <g key={v}>
            <path d={"M1001 " + (Math.round(y(v)) + 0.5) + "H1219"} stroke={v === 0 ? "#c0d0e0" : "#d8d8d8"} />
            <text x="986" y={y(v) + 4} fontSize="11" textAnchor="end" fill="#606060">
              {v}
            </text>
          </g>
        ))}
        {values.map((v, i) => (
          <g key={i}>
            <rect x={1010 + i * 34} y={y(v)} width="17" height={v * 1.260} fill={i === 0 ? "#0455ff" : "#ccc"} />
            <path d={"M" + (1000.5 + i * 34) + " 206v10"} stroke="#c0d0e0" />
          </g>
        ))}
        <path d="M1017 110H1219" stroke="#1455ee" strokeWidth="2" />
      </g>
    </svg>
  );
}

function DataBoard() {
  return (
    <aside className="w-[278px] shrink-0 overflow-hidden bg-white whitespace-nowrap shadow-[0_0_5px_rgba(0,0,0,0.4)]">
      <div className="flex h-[34px] items-center bg-[#22b598] pl-[25px] text-xs text-white">
        데이터보드
        <svg className="ml-[14px]" width="14" height="14" viewBox="0 0 14 14" aria-hidden="true">
          <path d="M0 6h4v8H0zM5 0h4v14H5zM10 4h4v10h-4z" fill="#fff" />
        </svg>
      </div>
      <div className="pt-[5px] pl-[15px]">
        <BoardBar title="설정된지표" />
        <ul className="mt-[5px] flex gap-[3px]">
          {tags.slice(0, 3).map((t) => (
            <BoardTag key={t.name} tag={t} />
          ))}
        </ul>
        <ul className="mt-[3px] flex gap-[3px]">
          {tags.slice(4).map((t) => (
            <BoardTag key={t.name} tag={t} />
          ))}
        </ul>

        <div className="mt-[23px]">
          <BoardBar title="추천지역 리스트">
            <Help />
          </BoardBar>
        </div>
        <ol className="mt-[5px] flex flex-col gap-[5px]">
          {regions.map((r) => (
            <li key={r.no} className="flex h-6 items-center rounded-full bg-[#f3f3f3] pr-2 text-xs text-[#666]">
              <span className="mr-2 grid size-6 shrink-0 place-items-center rounded-full bg-[#999] font-medium text-white">{r.no}</span>
              <span className="flex-1">{r.name}</span>
              {r.green && (
                <a href="#area" aria-label={r.name + " 지역 보기"} className="mr-[3px] grid size-5 place-items-center rounded-full bg-[#9cd89c]">
                  <HouseGlyph />
                </a>
              )}
              <a href="#home" aria-label={r.name + " 주거 보기"} className="grid size-5 place-items-center rounded-full bg-[#9ebcd8]">
                <HouseGlyph />
              </a>
            </li>
          ))}
        </ol>

        <div className="mt-[25px]">
          <BoardBar title="설정된 지표별 현황 보기" />
        </div>
        <div className="mt-[5px] flex h-7 text-[11px]">
          <button type="button" className="w-[106px] shrink-0 border border-[#0f9fb4] bg-linear-to-b from-[#0dbfd6] to-[#0f9db2] pb-1 font-medium text-white">
            주택
          </button>
          {["지역 인구", "생활 편의 교통"].map((t) => (
            <button key={t} type="button" className="w-[105px] shrink-0 border-t border-r border-[#c8c8c8] bg-linear-to-b from-[#e4e4e4] to-[#cbcbcb] pb-1 text-[#444]">
              {t}
            </button>
          ))}
        </div>
        <div className="flex h-12 items-start bg-[linear-gradient(#e6e6e6,#fff_14px)] pt-1">
          <a href="#rate" className="text-[11px] leading-[18px] text-black underline">
            공동주택비율
          </a>
        </div>
      </div>
      <Chart />
      <p className="-mt-[9px] flex items-center gap-[3px] pl-[47px] text-[11px] leading-4 text-[#555]">
        <span className="size-[3px] bg-[#ccc]" />
        <span>
          전국 : <span className="text-[#f00]">76</span>(%)
        </span>
      </p>
      <div className="mt-[65px] ml-[15px] h-[26px] rounded-l-full bg-[#00bcd8]" />
    </aside>
  );
}

/* ---------- page ---------- */

export default function App() {
  return (
    <div className="flex h-screen flex-col overflow-hidden bg-white font-['Noto_Sans_CJK_KR',sans-serif] text-[#333]">
      <nav className="flex h-[25px] shrink-0 items-center gap-[43px] overflow-hidden bg-[#203864] pl-[765px] text-[11px] whitespace-nowrap text-[#b9c6de]">
        {topLinks.map((l) => (
          <a key={l} href="#top">
            {l}
          </a>
        ))}
      </nav>

      <header className="flex h-[77px] shrink-0 items-center border-b border-[#c9d3dc] pl-[231px]">
        <a href="#home" className="block w-[198px] pt-[6px] text-[#1d3360]">
          <span className="flex h-8 items-center font-['Open_Sans',sans-serif]">
            <b className="text-[31px] leading-8">SGIS</b>
            <svg className="mb-4" width="12" height="16" viewBox="0 0 12 16" aria-hidden="true">
              <path d="M6 .5A5.500 5.500 0 0 0 .5 6C.5 9.500 4 12 6 15.500 8 12 11.500 9.500 11.500 6A5.500 5.500 0 0 0 6 .5z" fill="#1d3360" />
              <circle cx="6" cy="6" r="4" fill="#fff" />
              <path d="M6 3.500v5M3.500 6h5" stroke="#1d3360" />
            </svg>
            <span className="mb-2 text-[12px] leading-4 text-[#333]">plus</span>
          </span>
          <span className="block text-[12px] leading-[18px] font-bold">통계지리정보서비스</span>
        </a>
        <nav className="flex pt-1 text-[17px] whitespace-nowrap">
          {mainLinks.map((l) => (
            <a key={l} href="#menu" className="w-[143px] text-center">
              {l}
            </a>
          ))}
        </nav>
      </header>

      <div className="flex h-[34px] shrink-0 items-center pr-[29px] pl-[14px]">
        <svg width="14" height="12" viewBox="0 0 14 12" aria-hidden="true">
          <path d="M0 6h3v6H0zM5 3h3v9H5zM10 0h3v12h-3z" fill="#2f80cc" />
        </svg>
        <h1 className="ml-[5px] w-[160px] text-[16px] whitespace-nowrap text-[#22355f]">살고싶은 우리동네</h1>
        <button type="button" className="flex h-[26px] w-44 items-center justify-between rounded-full bg-[#e5e6e7] pr-[10px] pl-[10px] text-xs whitespace-nowrap text-[#555]">
          경기도 안산시 단원구 호수동
          <svg width="9" height="9" viewBox="0 0 9 9" aria-hidden="true">
            <path d="M0 0h9L4.500 9z" fill="#222" />
          </svg>
        </button>
        <button type="button" className="ml-auto h-[26px] w-[95px] rounded-full bg-[#1eab90] text-xs text-white">
          튜토리얼
        </button>
      </div>

      <div className="flex min-h-0 flex-1">
        <div className="flex min-w-0 flex-1 flex-col">
          <div className="flex h-9 shrink-0 items-center border-t border-b border-[#d4d4d8] bg-[#f4f4f4] text-[11px]">
            <button type="button" className="flex h-full w-24 items-center gap-[9px] bg-[#22b598] pl-[14px] text-xs whitespace-nowrap text-white">
              통계메뉴
              <svg width="13" height="15" viewBox="0 0 13 15" aria-hidden="true">
                <path d="M0 0h3v3H0zM5 0h3v3H5zM10 0h3v3h-3zM0 6h3v3H0zM5 6h3v3H5zM10 6h3v3h-3zM0 12h3v3H0zM5 12h3v3H5zM10 12h3v3h-3z" fill="#fff" />
              </svg>
            </button>
            <div className="flex gap-[9px] pl-[18px] whitespace-nowrap text-white">
              <button type="button" className="h-[21px] w-[50px] rounded-md bg-[#0075e2]">
                이용법
              </button>
              <button type="button" className="h-[21px] w-[50px] rounded-md bg-[#0075e2]">
                지표현황
              </button>
              <button type="button" className="h-[21px] w-[50px] rounded-md bg-[#fba048]">
                웹툰보기
              </button>
            </div>
          </div>
          <div className="flex min-h-0 flex-1">
            <SideNav />
            <SettingsPanel />
            <MapView />
          </div>
        </div>
        <DataBoard />
      </div>
    </div>
  );
}
